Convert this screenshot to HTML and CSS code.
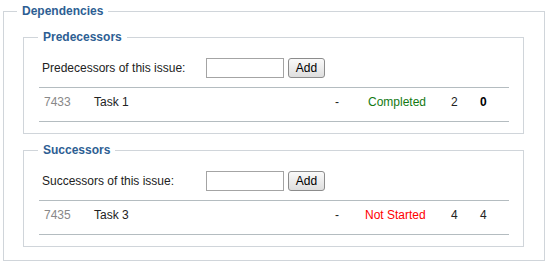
FILE: index.html
```html
<!DOCTYPE html>
<html lang="en">
<head>
  <meta charset="UTF-8" />
  <title>Dependencies</title>
  <link rel="stylesheet" href="styles.css">
</head>
<body>
  <fieldset class="box">
    <legend>Dependencies</legend>

    <fieldset class="group">
      <legend>Predecessors</legend>
      <div class="add-row">
        <label class="add-label" for="predInput">Predecessors of this issue:</label>
        <input class="add-input" id="predInput" type="text" />
        <button class="add-btn">Add</button>
      </div>
      <div class="dep-list">
        <div class="dep-row">
          <div class="dep-id">7433</div>
          <div class="dep-name">Task 1</div>
          <div class="dep-dash">-</div>
          <div class="dep-status done">Completed</div>
          <div class="dep-num">2</div>
          <div class="dep-num strong">0</div>
        </div>
      </div>
    </fieldset>

    <fieldset class="group">
      <legend>Successors</legend>
      <div class="add-row">
        <label class="add-label" for="succInput">Successors of this issue:</label>
        <input class="add-input" id="succInput" type="text" />
        <button class="add-btn">Add</button>
      </div>
      <div class="dep-list">
        <div class="dep-row">
          <div class="dep-id">7435</div>
          <div class="dep-name">Task 3</div>
          <div class="dep-dash">-</div>
          <div class="dep-status todo">Not Started</div>
          <div class="dep-num">4</div>
          <div class="dep-num">4</div>
        </div>
      </div>
    </fieldset>
  </fieldset>
</body>
</html>
```

FILE: styles.css
```css
:root {
  --legend: #2d5e93;
  --frame: #d0d5da;
  --rule: #b4bcc0;
  --text: #222222;
}

body {
  margin: 0;
  padding: 4px 7px 0 3px;
  background: #ffffff;
  font-family: "Liberation Sans", Arial, sans-serif;
  font-size: 12px;
  line-height: 14px;
  color: var(--text);
}

fieldset {
  margin: 0;
  min-width: 0;
}

legend {
  padding: 0 5px;
  margin-left: -6px;
  font-weight: bold;
  font-size: 12px;
  line-height: 14px;
  color: var(--legend);
}

.box {
  border: 1px solid var(--frame);
  padding: 12px 20px 13px 19px;
}

.group {
  border: 1px solid var(--frame);
  padding: 14px 14px 11px 15px;
}

.group legend {
  margin-left: -1px;
}

.group + .group {
  margin-top: 9px;
}

.add-row {
  display: flex;
  align-items: center;
  height: 20px;
  padding-left: 3px;
}

.add-label {
  flex: 0 0 164px;
}

.add-input {
  box-sizing: border-box;
  width: 78px;
  height: 20px;
  margin: 0;
  padding: 1px 3px;
  border: 1px solid #a4a4a4;
  font: inherit;
}

.add-btn {
  box-sizing: border-box;
  width: 37px;
  height: 20px;
  margin: 0 0 0 4px;
  padding: 0;
  border: 1px solid #8c8c8c;
  border-radius: 3px;
  background: linear-gradient(#fafafa, #dedede);
  font: inherit;
  color: #000000;
  cursor: pointer;
}

.dep-list {
  margin-top: 9px;
  border-top: 1px solid var(--rule);
  border-bottom: 1px solid var(--rule);
}

.dep-row {
  display: grid;
  grid-template-columns: 50px 241px 33px 83px 29px 1fr;
  padding: 7px 0 12px 5px;
}

.dep-id {
  color: #888888;
}

.dep-status.done {
  color: #137a13;
}

.dep-status.todo {
  color: #ff0000;
  margin-left: -3px;
}

.strong {
  font-weight: bold;
  color: #000000;
}
```
